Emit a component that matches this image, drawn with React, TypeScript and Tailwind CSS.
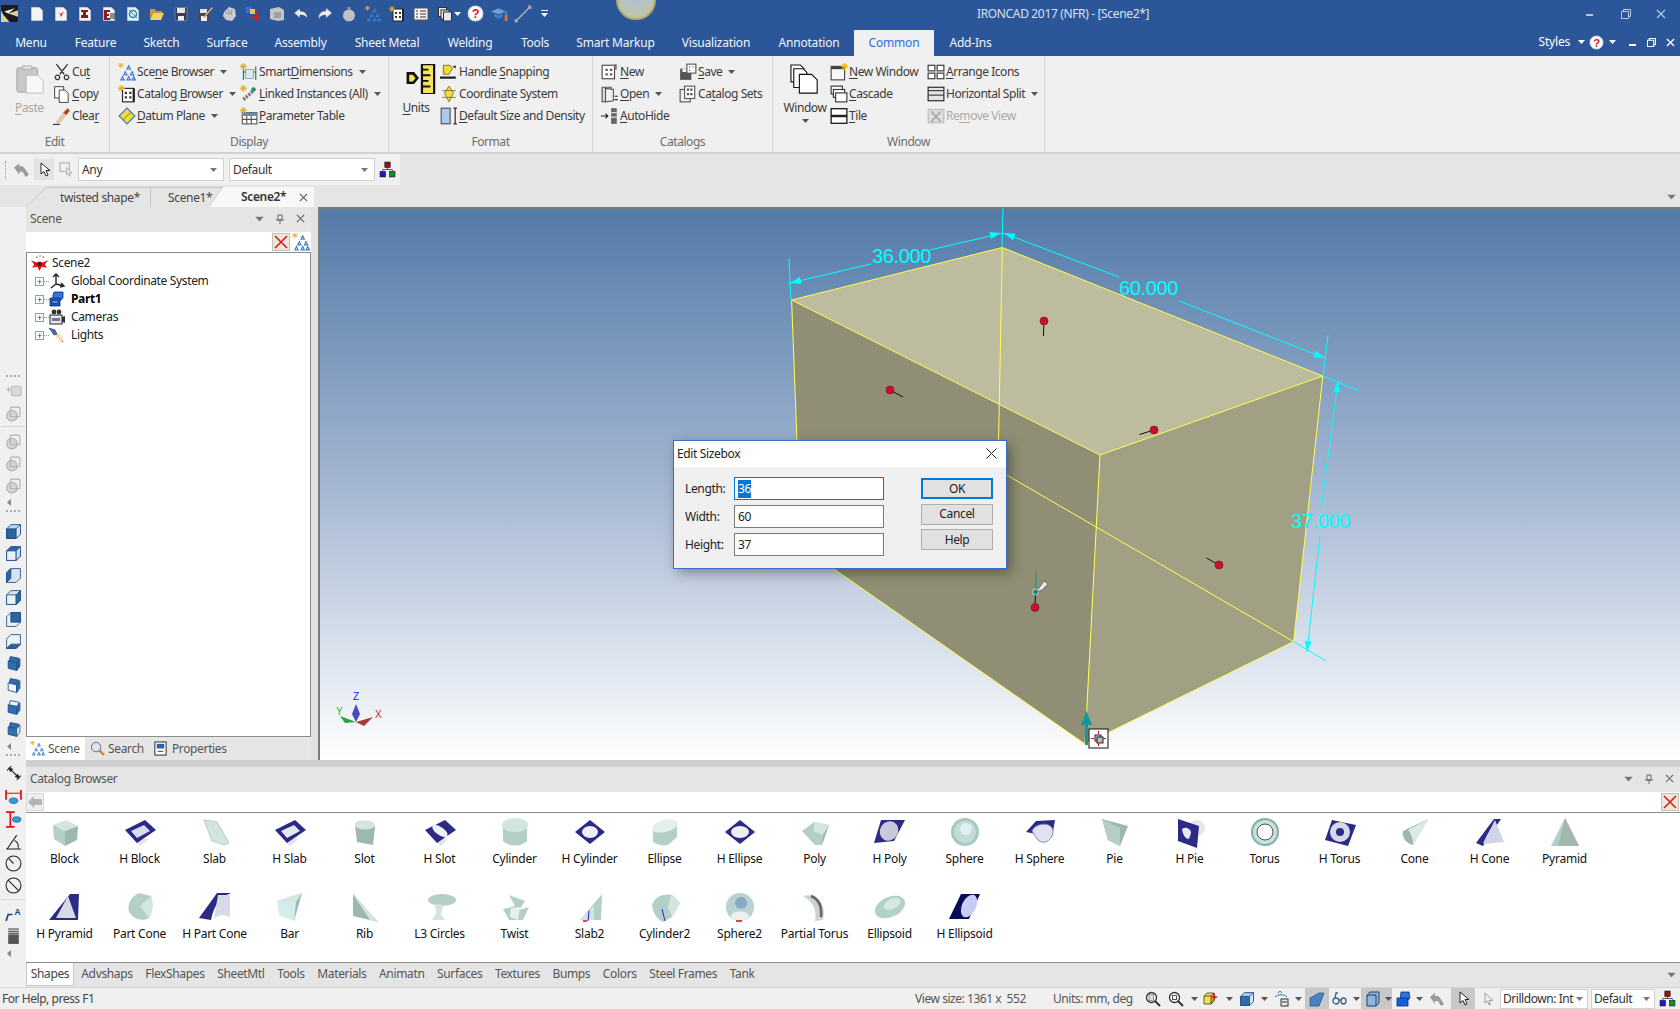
import type { ReactNode } from "react";

// ---- little drawn icons, all on a 16 box ----
const sun = <path d="M3 0v6M0 3h6M1 1l4 4M5 1L1 5" stroke="#e6b422" strokeWidth="1" />;
const nodes = (c = "#3f7fcf") => (
  <g fill="none" stroke={c} strokeWidth="1">
    <path d="M9.5 2.5l-1.5 3h3zM6.5 7.5l-1.5 3h3zM12.5 7.5l-1.5 3h3zM4 12l-1.5 3h3zM9.5 12l-1.5 3h3zM14 12l-1.5 3h3z" />
  </g>
);
const page = (c = "#f4f4f4") => <path d="M2.5 1.5h8l3 3v10h-11z" fill={c} stroke="#d8d8d8" strokeWidth=".6" />;
const cube = (a: string, b: string, c: string) => (
  <g stroke="#1e4e85" strokeWidth=".8">
    <path d="M1.5 5.5l4-4h9v9l-4 4h-9z" fill={b} />
    <path d="M1.5 5.5h9v9h-9z" fill={a} />
    <path d="M10.5 5.5l4-4v9l-4 4z" fill={c} />
  </g>
);
const solid = (a: string, b: string, c: string) => (
  <g stroke="#1e4e85" strokeWidth=".8">
    <path d="M5 1.5l8 1.5-1 4-8-1.5z" fill={b} />
    <path d="M3 5.5l8 2v7l-8-2z" fill={a} />
    <path d="M11 7.5l3-4v7l-3 4z" fill={c} />
  </g>
);
const ghost = (
  <g fill="#d4d4d4" stroke="#b0b0b0" strokeWidth="1">
    <circle cx="6.5" cy="10" r="5" />
    <rect x="5" y="2" width="9" height="9" rx="1" fill="none" />
  </g>
);

const icons: Record<string, ReactNode> = {
  logo: (
    <g>
      <rect x="0" y="0" width="16" height="16" fill="#d9d39a" />
      <path d="M0 0h16v5L7 8l9 3v5H8L2 9 0 5z" fill="#1c1c1c" />
      <path d="M3 6l10-3-6 5 6 3z" fill="#eee" />
    </g>
  ),
  doc: page(),
  docS: <g>{page()}<path d="M4 6l4 2 3-3-3 6-1-3z" fill="#c01818" /></g>,
  docI: <g>{page()}<path d="M4 4h7v2H9v3h2v3H4V9h2V6H4z" fill="#901818" /></g>,
  docE: <g>{page()}<path d="M3 4h6v2H6v2h2v2H6v2h3v2H3z" fill="#901818" /><path d="M9 8h5M9 10h5M9 12h5" stroke="#222" /></g>,
  docC: <g>{page("#e6f3fa")}<circle cx="8" cy="8" r="3.5" fill="none" stroke="#2a86b8" strokeWidth="1.5" /><path d="M4 4l8 8" stroke="#2a86b8" /></g>,
  folder: <g><path d="M1 3h5l1 2h6v2H4l-3 6z" fill="#c79a2d" /><path d="M4 7h11l-3 7H1z" fill="#f3d25f" /></g>,
  save: <g><rect x="2" y="1.5" width="12" height="13" rx="1" fill="#3a3f4d" stroke="#aab" strokeWidth=".5" /><rect x="4" y="2" width="8" height="5" fill="#dfe3ea" /><rect x="5" y="10" width="6" height="4.5" fill="#eef" /></g>,
  saveEdit: <g><rect x="1" y="3" width="12" height="12" fill="#444a58" /><rect x="3" y="3" width="7" height="4" fill="#e4e4e4" /><rect x="4" y="10" width="6" height="5" fill="#eee" /><path d="M15 1l-7 8-1 2 2-1 7-8z" fill="#f0d9a0" stroke="#7a5a20" strokeWidth=".5" /></g>,
  grayHand: <g fill="#c9cccf"><path d="M3 6l5-5 6 2 1 7-4 5-6-1-3-4z" /><path d="M4 6l4 2M7 3l2 5M11 4l-1 5" stroke="#8e9296" /></g>,
  addPart: <g><rect x="1" y="1" width="6" height="6" fill="#3c6fd0" /><rect x="5" y="3" width="5" height="5" fill="#eec74a" /><path d="M11 6v9M7 11h8" stroke="#c22" strokeWidth="2" /></g>,
  grayDoc: <g fill="#c2c4c6"><path d="M1 3l9-2 5 3v10l-6 1-8-2z" /><path d="M5 6h7v6H5z" fill="#9da0a3" /></g>,
  undo: <path d="M1 7l6-5v3c5 0 8 3 7 8-1-3-3-4-7-4v3z" fill="#e9ecef" stroke="#1f1f1f" strokeWidth=".4" />,
  redo: <path d="M15 7L9 2v3c-5 0-8 3-7 8 1-3 3-4 7-4v3z" fill="#e9ecef" stroke="#777" strokeWidth=".4" />,
  bulb: <g><circle cx="8" cy="9.5" r="6" fill="#bfc2c5" /><rect x="6.5" y="1" width="3" height="3" fill="#9a9a9a" /></g>,
  sceneB: <g>{nodes()}<g transform="translate(0 -0.5) scale(.85)">{sun}</g></g>,
  catB: <g><rect x="4" y="3" width="10" height="12" fill="#fff" stroke="#222" /><path d="M6 6h2v2H6zM10 6h2v2h-2zM6 10h2v2H6zM10 10h2v2h-2z" fill="#333" /><path d="M14 3v12" stroke="#222" strokeWidth="2" />{sun}</g>,
  list: <g><rect x="1" y="2" width="14" height="12" fill="#f4f4f4" stroke="#555" /><path d="M3 5h2M7 5h6M3 8h2M7 8h6M3 11h2M7 11h6" stroke="#333" /></g>,
  pages: <g fill="#e8e8e8" stroke="#333"><rect x="1.5" y="1.5" width="8" height="9" /><rect x="4" y="4" width="8" height="9" /><rect x="6.5" y="6" width="8" height="9" /></g>,
  help: <g><circle cx="8" cy="8" r="7" fill="#fff" stroke="#cbd5e8" /><text x="8" y="12.5" fontSize="12" fontWeight="700" fill="#e01515" textAnchor="middle" fontFamily="Liberation Sans">?</text></g>,
  cap: <g><path d="M0 6l7-3 7 3-7 3z" fill="#6a9fd8" /><path d="M3 8v3l4 2 4-2V8l-4 2z" fill="#4a7fc0" /><rect x="13" y="6" width="2.5" height="3" fill="#3b7bd0" /><rect x="13" y="9" width="2.5" height="6" fill="#e8732a" /></g>,
  lineTool: <g><path d="M2 14L14 2" stroke="#b8c0c8" /><rect x="0.5" y="12.5" width="3" height="3" fill="#9ca4ac" /><rect x="12.5" y="0.5" width="3" height="3" fill="#9ca4ac" /></g>,
  paste: (
    <g>
      <rect x="1" y="2" width="11" height="13" rx="1" fill="#c8c8c8" stroke="#a0a0a0" strokeWidth=".5" />
      <rect x="4" y="1" width="5" height="2" fill="#ddd" stroke="#a8a8a8" strokeWidth=".4" />
      <path d="M6 6h6l3 3v6.5H6z" fill="#f8f8f8" stroke="#bdbdbd" strokeWidth=".5" />
    </g>
  ),
  cut: <path d="M3 1l7 9M13 1L6 10M5 11a2 2 0 1 1-3 2 2 2 0 0 1 3-2zM11 11a2 2 0 1 0 3 2 2 2 0 0 0-3-2z" fill="none" stroke="#333" strokeWidth="1.1" />,
  copy: <g fill="#fff" stroke="#333" strokeWidth=".8"><rect x="1.5" y="1.5" width="8" height="10" /><path d="M5.5 4.5h5l3 3v8h-8z" /></g>,
  clear: <g><path d="M2 14l7-9 3 2-6 8z" fill="#e0c9b0" /><path d="M9 5l4-4 2 2-3 4z" fill="#b0461a" /><path d="M0 15.5h6" stroke="#333" /></g>,
  datum: <g><path d="M1 8l7-7 7 7-7 7z" fill="#f0dc3c" stroke="#3d77c0" /><path d="M5 11l6-6" stroke="#555" strokeDasharray="1 1" /></g>,
  smartDim: <g><path d="M3 5v10M14 3v12M3 8h11" stroke="#1a7a6e" /><rect x="5" y="6" width="7" height="8" fill="#d5ecea" stroke="#555" strokeWidth=".4" />{sun}</g>,
  linked: <g><path d="M3 13l9-8" stroke="#777" strokeWidth="3" strokeDasharray="2 1" /><circle cx="12" cy="4" r="2" fill="#1a8a7a" />{sun}</g>,
  param: <g><rect x="2" y="5" width="13" height="10" fill="#fff" stroke="#555" /><rect x="2" y="5" width="13" height="3" fill="#6d8ba8" /><path d="M2 11h13M6 8v7M10 8v7" stroke="#555" />{sun}</g>,
  units: <g><path d="M8.5 0H15v16H8.5z" fill="#f4e45c" stroke="#111" strokeWidth="1.2" /><path d="M9 3h3M9 6h4M9 9h3M9 12h4" stroke="#111" /><path d="M1 5h3l2 2.5L4 10H1z" fill="#f4e45c" stroke="#111" strokeWidth="1.4" /></g>,
  handle: <g><path d="M3 2h6l2 3-3 5H3z" fill="#f0d838" stroke="#6a5a10" strokeWidth=".7" /><path d="M11 3l3-1v3z" fill="#333" /><path d="M0 13h14" stroke="#222" strokeWidth="2" /></g>,
  coord: <path d="M8 1l4 6-4 8-4-8zM2 5h12M2 11h12" fill="#f4dc4a" stroke="#7a7420" strokeWidth=".8" />,
  defSize: <g><rect x="1" y="1" width="8" height="14" fill="#a9c8ea" stroke="#333" strokeWidth=".8" /><path d="M12 1h3M13.5 1v14M12 15h3" stroke="#222" /></g>,
  catNew: <g><rect x="1" y="2" width="11" height="12" fill="#fff" stroke="#444" /><path d="M4 5h2v2H4zM8 5h2v2H8zM4 9h2v2H4zM8 9h2v2H8z" fill="#555" /><path d="M13 1v5" stroke="#777" strokeWidth="2" /></g>,
  catOpen: <g><path d="M1 2l8 0 0 12-8 1z" fill="#ddd" stroke="#555" /><path d="M4 3l7 1v10l-7 1z" fill="#f2f2f2" stroke="#555" /><path d="M12 10h3M12 13h3" stroke="#333" /></g>,
  autoHide: <g><path d="M0 8h6M4 6l2 2-2 2" stroke="#222" fill="none" /><rect x="9" y="1" width="5" height="14" fill="#666" /><path d="M9 5h5M9 9h5" stroke="#ddd" /></g>,
  catSave: <g><rect x="1" y="5" width="10" height="10" fill="#555" /><rect x="3" y="5" width="5" height="3" fill="#eee" /><rect x="7" y="1" width="8" height="8" fill="#fff" stroke="#555" /><path d="M9 3h1v1H9zM12 3h1v1h-1zM9 6h1v1H9z" fill="#444" /></g>,
  catSets: <g><rect x="1" y="4" width="9" height="11" fill="#eee" stroke="#555" /><rect x="5" y="1" width="9" height="11" fill="#fff" stroke="#555" /><path d="M7 3h2v2H7zM10 3h2v2h-2zM7 7h2v2H7zM10 7h2v2h-2z" fill="#555" /></g>,
  winBig: <g fill="#fff" stroke="#111" strokeWidth=".6"><path d="M.5.5h5l2 2v7h-7z" /><path d="M2 2.5h5l2 2v8H2z" /><path d="M5 5.5h6.5l3 3v7H5z" /></g>,
  newWin: <g><rect x="1" y="3" width="12" height="12" fill="#f7f7f7" stroke="#444" /><rect x="1" y="3" width="12" height="2.5" fill="#444" /><g transform="translate(10 0)">{sun}</g></g>,
  cascade: <g fill="#fff" stroke="#333"><rect x="1" y="1" width="10" height="7" /><rect x="3" y="4" width="10" height="7" /><rect x="5" y="7" width="10" height="8" /></g>,
  tile: <g fill="#fff" stroke="#222" strokeWidth="1.2"><rect x="1" y="1.5" width="14" height="6" /><rect x="1" y="8.5" width="14" height="6" /></g>,
  arrange: <g fill="#fff" stroke="#333"><rect x="1" y="2" width="6" height="5" /><rect x="9" y="2" width="6" height="5" /><rect x="1" y="9" width="6" height="5" /><rect x="9" y="9" width="6" height="5" /></g>,
  hsplit: <g><rect x="1" y="2" width="14" height="12" fill="#e4e4e4" stroke="#222" /><path d="M1 5h14M1 9h14" stroke="#444" /></g>,
  removeView: <g><rect x="1" y="2" width="14" height="12" fill="#ddd" stroke="#bbb" /><path d="M4 4l8 9M12 4l-8 9" stroke="#a8a8a8" strokeWidth="1.6" /></g>,
  arrowGray: <path d="M1 6l5-4v3h3l2 2 4 6-3 2-3-5H6v3z" fill="#9a9a9a" />,
  cursor: <path d="M5 1l0 11 3-2.5 2 4.5 2-1-2-4.5h4z" fill="#fff" stroke="#111" strokeWidth=".9" />,
  cursorBox: <g><rect x="1" y="1" width="10" height="9" fill="none" stroke="#a8a8a8" /><path d="M8 6v8l2-2 1 3 1-.5-1-3h3z" fill="#eee" stroke="#999" strokeWidth=".7" /></g>,
  network: <g stroke="#111" strokeWidth=".6"><rect x="5.5" y="1" width="5" height="5" fill="#a01010" /><rect x="1" y="10" width="5" height="5" fill="#1818d8" /><rect x="10" y="10" width="5" height="5" fill="#109030" /><path d="M8 6v2M3.5 10V8h9v2" fill="none" /></g>,
  treeScene: <g><path d="M0 5l5 2 3-1 3 1 5-2-3 4 2 3-5-1-2 4-2-4-5 1 2-3z" fill="#d81818" /><circle cx="8" cy="8.500" r="2" fill="#601010" /><path d="M5 2h1M8 1h1M11 2h1" stroke="#222" /></g>,
  treeCoord: <path d="M7 1v10M4 4l3-3 3 3M7 11l8 2M12 10l3 3-4 1M7 11l-5 4" fill="none" stroke="#222" strokeWidth="1.4" />,
  treePart: <g stroke="#0c2f80" strokeWidth=".8"><path d="M5 1h9v6l-3 3H4V4z" fill="#2f74d8" /><path d="M1 7h10v8H1z" fill="#1a56c0" /><path d="M3 10h6v2H3z" fill="#bcd" /></g>,
  treeCam: <g><circle cx="5" cy="3" r="2.4" fill="#333" /><circle cx="10" cy="3" r="2.4" fill="#333" /><rect x="1" y="6" width="12" height="9" fill="#e8e6f0" stroke="#222" /><rect x="3" y="9" width="8" height="3" fill="#778" /><path d="M13 8l3-1v7l-3-1z" fill="#333" /></g>,
  treeLight: <g><path d="M0 1l6 2 2 4-3 1-2-3z" fill="#3a6fd0" stroke="#112" strokeWidth=".5" /><path d="M7 7l7 8" stroke="#d82020" /><path d="M6 9l4-3 5 6-3 3z" fill="#f0e6b0" opacity=".85" /></g>,
  search: <g><circle cx="6.5" cy="6.5" r="5" fill="#d8e6f2" stroke="#667" /><path d="M10 10l5 5" stroke="#c68a1a" strokeWidth="2.4" /></g>,
  props: <g><rect x="2" y="1" width="12" height="14" fill="#fff" stroke="#222" /><rect x="4" y="3" width="8" height="5" fill="#2c5fa8" /><path d="M5 11h6" stroke="#333" /></g>,
  gAdd: <g stroke="#bbb" fill="#d8d8d8"><rect x="6" y="3" width="9" height="9" rx="1" /><path d="M1 6h5M3.5 3.5v5" fill="none" /></g>,
  g1: ghost,
  v1: cube("#2c659f", "#bcd4ea", "#dce9f5"),
  v2: cube("#e6f0f9", "#2c659f", "#cfe0f0"),
  v3: <g stroke="#1e4e85" strokeWidth=".8"><path d="M1.5 5.5l4-4h9v9l-4 4h-9z" fill="#d5e4f2" /><path d="M1.5 5.5l4-4v9l-4 4z" fill="#2c659f" /></g>,
  v4: cube("#eaf2fa", "#d5e4f2", "#2c659f"),
  v5: <g stroke="#1e4e85" strokeWidth=".8"><path d="M1.5 5.5l4-4h9v9l-4 4h-9z" fill="#eaf2fa" /><path d="M5.5 1.5h9v9h-9z" fill="#2c659f" /></g>,
  v6: <g stroke="#1e4e85" strokeWidth=".8"><path d="M1.5 5.5l4-4h9v9l-4 4h-9z" fill="#eaf2fa" /><path d="M1.5 14.5l4-4h9l-4 4z" fill="#2c659f" /></g>,
  s1: solid("#2f6eb0", "#2f6eb0", "#2a5f98"),
  s2: solid("#eef4fb", "#2f6eb0", "#2f6eb0"),
  s3: solid("#2f6eb0", "#eef4fb", "#2f6eb0"),
  s4: solid("#2f6eb0", "#2f6eb0", "#eef4fb"),
  dim: <g stroke="#222" fill="none"><path d="M4 3l9 9M2 5l4-4M11 14l4-4" /><path d="M4 3l3 1-2 2zM13 12l-3-1 2-2z" fill="#222" /></g>,
  dimW: <g><path d="M1 1v9M15 1v9" stroke="#e01010" strokeWidth="1.6" /><path d="M1 4h14" stroke="#e01010" /><ellipse cx="8" cy="11" rx="4" ry="2.6" fill="#2aa0e8" stroke="#123" strokeWidth=".5" /></g>,
  dimH: <g><path d="M1 1h8M1 15h8M5 1v14" stroke="#e01010" strokeWidth="1.6" /><ellipse cx="11" cy="8" rx="4" ry="2.6" fill="#2aa0e8" stroke="#123" strokeWidth=".5" /></g>,
  dimA: <g stroke="#222" fill="none"><path d="M1 15h14M2 15L11 2M9 7a6 6 0 0 1 3 8" /></g>,
  dimR: <g stroke="#222" fill="none"><circle cx="8" cy="8" r="7" /><path d="M8 8L3.5 3.5" /></g>,
  dimD: <g stroke="#222" fill="none"><circle cx="8" cy="8" r="7" /><path d="M3 3l10 10" /></g>,
  note: <g><path d="M1 14l2-6h4" stroke="#1c3f86" strokeWidth="1.6" fill="none" /><text x="9" y="8" fontSize="8" fontWeight="700" fill="#1c3f86" fontFamily="Liberation Sans">A</text></g>,
  barrel: <g><path d="M3 1h10M3 3h10M3 5h10" stroke="#333" /><rect x="3" y="6" width="10" height="9" fill="#555" /></g>,
  zoomFit: <g><circle cx="6.5" cy="6.5" r="5" fill="#fff" stroke="#333" strokeWidth="1.3" /><rect x="4" y="3.5" width="4.5" height="6" fill="#ddd" stroke="#555" strokeWidth=".6" /><path d="M10 10l5 5" stroke="#333" strokeWidth="2" /></g>,
  zoomBox: <g><circle cx="6.5" cy="6.5" r="5" fill="#fff" stroke="#333" strokeWidth="1.3" /><rect x="4.5" y="4.5" width="4" height="4" fill="none" stroke="#555" /><path d="M10 10l5 5" stroke="#333" strokeWidth="2" /></g>,
  yellowBox: <g stroke="#222" strokeWidth=".7"><path d="M2 5l3-3h7v8l-3 3H2z" fill="#f5e050" /><path d="M9 5l3-3v8l-3 3zM2 5h7" fill="#c8b430" /><path d="M10 6h5M12.5 3.5v5" stroke="#e01010" strokeWidth="1.3" /></g>,
  blueBox: cube("#2f6ea8", "#a8c8e4", "#d2e4f4"),
  camOrbit: <g><rect x="7" y="8" width="7" height="7" fill="#e8e8e8" stroke="#333" /><path d="M1 6c3-3 9-3 12 0M4 2l2-2 2 2" fill="none" stroke="#2a6db0" /><path d="M8 11h5" stroke="#333" /></g>,
  skew: <path d="M1 7l9-5h5l-5 13H1z" fill="#4a84c0" stroke="#1e4e85" strokeWidth=".7" />,
  glasses: <g fill="none" stroke="#3a5f8a" strokeWidth="1.3"><circle cx="4" cy="10" r="3" /><ellipse cx="11.5" cy="10" rx="2.5" ry="3" /><path d="M7 9l2 0M3 7l1-5 2 0" /></g>,
  blueCube: <path d="M2 4h9v11H2zM2 4l3-3h9v11l-3 3" fill="#8fb4de" stroke="#1e3e66" />,
  partBlue: <g stroke="#0c2f80" strokeWidth=".8"><path d="M5 1h8l1 6-3 3H4z" fill="#2f74d8" /><rect x="1" y="7" width="11" height="8" fill="#1560d8" /></g>,
  pointerSm: <path d="M5 2v10l2.5-2 1.5 4 1.5-.6-1.5-4H13z" fill="#f4f4f4" stroke="#888" strokeWidth=".8" />,
};

function Icon({ n, s = 16, className = "" }: { n: string; s?: number; className?: string }) {
  return (
    <svg viewBox="0 0 16 16" width={s} height={s} className={"shrink-0 " + className}>
      {icons[n]}
    </svg>
  );
}

function Caret({ c = "#555", className = "" }: { c?: string; className?: string }) {
  return (
    <svg viewBox="0 0 7 4" width="7" height="4" className={"shrink-0 " + className}>
      <path d="M0 0h7L3.5 4z" fill={c} />
    </svg>
  );
}

// label with a keyboard mnemonic underlined
function Ul({ t, u }: { t: string; u?: number }) {
  if (u === undefined) return <>{t}</>;
  return (
    <>
      {t.slice(0, u)}
      <u className="underline-offset-2">{t[u]}</u>
      {t.slice(u + 1)}
    </>
  );
}

const quick = ["doc", "docS", "docI", "docE", "docC", "folder", "save", "saveEdit", "grayHand", "addPart", "grayDoc", "undo", "redo", "bulb", "sceneB", "catB", "list", "pages"];

const menuTabs = [
  ["Menu", "w-[62px]"], ["Feature", "w-[67px]"], ["Sketch", "w-[65px]"], ["Surface", "w-[66px]"], ["Assembly", "w-[81px]"],
  ["Sheet Metal", "w-[92px]"], ["Welding", "w-[74px]"], ["Tools", "w-[56px]"], ["Smart Markup", "w-[105px]"],
  ["Visualization", "w-[96px]"], ["Annotation", "w-[90px]"], ["Common", "w-[80px]"], ["Add-Ins", "w-[73px]"],
];

function TitleBar() {
  return (
    <div className="relative flex h-[27px] items-center overflow-hidden bg-[#2b579a] text-[12px] text-[#d8e2f0]">
      <div className="ml-[1px]">
        <Icon n="logo" s={17} />
      </div>
      <div className="ml-[11px] flex items-center gap-[8px]">
        {quick.map((n) => (
          <Icon key={n} n={n} s={16} />
        ))}
      </div>
      <Caret c="#fff" className="ml-[1px]" />
      <Icon n="help" s={17} className="ml-[6px]" />
      <Icon n="cap" s={17} className="ml-[7px]" />
      <Icon n="lineTool" s={18} className="ml-[6px]" />
      <div className="ml-[9px] flex flex-col items-center gap-[2px]">
        <span className="h-[1px] w-[7px] bg-white" />
        <Caret c="#fff" />
      </div>
      {/* ball poking out of the frame */}
      <div className="absolute left-[616px] top-[-22px] h-[42px] w-[40px] rounded-full border-[2px] border-[#b0a868] bg-[radial-gradient(circle_at_50%_30%,#a8c0de,#c6c69c)]" />
      <span className="absolute left-[977px] top-[5px]">IRONCAD 2017 (NFR) - [Scene2*]</span>
      <div className="ml-auto flex items-center pr-[14px]">
        <span className="mr-[28px] mt-[3px] h-[2px] w-[7px] bg-[#b9c9e0]" />
        <svg viewBox="0 0 10 10" width="10" height="10" className="mr-[25px]"><path d="M2.5 2.5v-2h7v7h-2M.5 2.5h7v7h-7z" fill="none" stroke="#b9c9e0" /></svg>
        <svg viewBox="0 0 10 10" width="10" height="10"><path d="M1 1l8 8M9 1l-8 8" stroke="#b9c9e0" strokeWidth="1.1" /></svg>
      </div>
    </div>
  );
}

function MenuBar() {
  return (
    <div className="flex h-[29px] items-end bg-[#2b579a] text-[12px] tracking-[-0.2px]">
      {menuTabs.map(([t, w]) => (
        <div
          key={t}
          className={
            w +
            " flex h-[26px] items-center justify-center " +
            (t === "Common" ? "bg-[#f0f0f0] text-[#2a6fe0]" : "text-[#f2f5fa]")
          }
        >
          {t}
        </div>
      ))}
      <div className="ml-auto mb-[5px] flex items-center text-white">
        <span>Styles</span>
        <Caret c="#fff" className="ml-[8px]" />
        <Icon n="help" s={15} className="ml-[4px]" />
        <Caret c="#fff" className="ml-[5px]" />
        <span className="ml-[13px] mt-[6px] h-[2px] w-[7px] bg-white" />
        <svg viewBox="0 0 10 10" width="9" height="9" className="ml-[11px]"><path d="M2.5 2.5v-2h7v7h-2M.5 2.5h7v7h-7z" fill="none" stroke="#fff" strokeWidth="1.2" /></svg>
        <svg viewBox="0 0 10 10" width="9" height="9" className="ml-[10px] mr-[5px]"><path d="M1 1l8 8M9 1l-8 8" stroke="#fff" strokeWidth="1.5" /></svg>
      </div>
    </div>
  );
}

function Item({ n, t, u, caret, off, w }: { n: string; t: string; u?: number; caret?: boolean; off?: boolean; w: string }) {
  return (
    <div className={w + " flex h-[22px] items-center " + (off ? "text-[#aaa]" : "")}>
      <Icon n={n} s={18} className="mr-[1px]" />
      <span className="whitespace-nowrap"><Ul t={t} u={u} /></span>
      {caret && <Caret className="ml-[6px]" />}
    </div>
  );
}

function Group({ label, w, children }: { label: string; w: string; children: ReactNode }) {
  return (
    <div className={w + " flex shrink-0 flex-col border-r border-[#d4d4d4]"}>
      <div className="flex h-[73px] pt-[5px]">{children}</div>
      <div className="h-[23px] pt-[5px] text-center leading-[16px] text-[#6c6c6c]">{label}</div>
    </div>
  );
}

function Ribbon() {
  return (
    <div className="flex h-[98px] border-b-[2px] border-[#d2d2d2] bg-[#f0f0f0] text-[12px] tracking-[-0.45px] text-[#3a3a3a]">
      <Group label="Edit" w="w-[110px]">
        <div className="ml-[15px] flex w-[38px] flex-col items-start">
          <Icon n="paste" s={30} className="mt-[3px]" />
          <span className="mt-[5px] text-[#a8a8a8]"><Ul t="Paste" u={0} /></span>
        </div>
        <div className="flex flex-col">
          <Item n="cut" t="Cut" u={2} w="w-[50px]" />
          <Item n="copy" t="Copy" u={0} w="w-[50px]" />
          <Item n="clear" t="Clear" u={4} w="w-[50px]" />
        </div>
      </Group>
      <Group label="Display" w="w-[279px]">
        <div className="ml-[8px] flex w-[122px] flex-col">
          <Item n="sceneB" t="Scene Browser" u={3} caret w="w-[120px]" />
          <Item n="catB" t="Catalog Browser" u={8} caret w="w-[120px]" />
          <Item n="datum" t="Datum Plane" u={0} caret w="w-[120px]" />
        </div>
        <div className="flex flex-col">
          <Item n="smartDim" t="SmartDimensions" u={5} caret w="w-[140px]" />
          <Item n="linked" t="Linked Instances (All)" u={0} caret w="w-[140px]" />
          <Item n="param" t="Parameter Table" u={0} w="w-[140px]" />
        </div>
      </Group>
      <Group label="Format" w="w-[204px]">
        <div className="ml-[13px] flex w-[38px] flex-col items-center">
          <Icon n="units" s={30} className="mt-[3px]" />
          <span className="mt-[5px] mr-[10px]"><Ul t="Units" u={0} /></span>
        </div>
        <div className="flex flex-col">
          <Item n="handle" t="Handle Snapping" u={7} w="w-[150px]" />
          <Item n="coord" t="Coordinate System" u={7} w="w-[150px]" />
          <Item n="defSize" t="Default Size and Density" u={0} w="w-[150px]" />
        </div>
      </Group>
      <Group label="Catalogs" w="w-[180px]">
        <div className="ml-[8px] flex w-[78px] flex-col">
          <Item n="catNew" t="New" u={0} w="w-[70px]" />
          <Item n="catOpen" t="Open" u={0} caret w="w-[70px]" />
          <Item n="autoHide" t="AutoHide" u={0} w="w-[70px]" />
        </div>
        <div className="flex flex-col">
          <Item n="catSave" t="Save" u={0} caret w="w-[70px]" />
          <Item n="catSets" t="Catalog Sets" u={2} w="w-[70px]" />
        </div>
      </Group>
      <Group label="Window" w="w-[272px]">
        <div className="ml-[7px] flex w-[50px] flex-col items-center">
          <Icon n="winBig" s={30} className="mt-[3px]" />
          <span className="mt-[5px]">Window</span>
          <Caret className="mt-[2px]" />
        </div>
        <div className="flex flex-col">
          <Item n="newWin" t="New Window" u={0} w="w-[97px]" />
          <Item n="cascade" t="Cascade" u={0} w="w-[97px]" />
          <Item n="tile" t="Tile" u={0} w="w-[97px]" />
        </div>
        <div className="flex flex-col">
          <Item n="arrange" t="Arrange Icons" u={0} w="w-[115px]" />
          <Item n="hsplit" t="Horizontal Split" caret w="w-[115px]" />
          <Item n="removeView" t="Remove View" u={2} off w="w-[115px]" />
        </div>
      </Group>
    </div>
  );
}

function Combo({ t, w }: { t: string; w: string }) {
  return (
    <div className={w + " flex h-[23px] items-center justify-between border border-[#d0d0d0] bg-white pl-[3px] pr-[6px] text-[12px] text-[#333]"}>
      <span className="whitespace-nowrap">{t}</span>
      <Caret c="#777" />
    </div>
  );
}

function SelectBar() {
  return (
    <div className="flex h-[31px] bg-[#e5e5e5]">
      <div className="flex h-full w-[400px] items-center bg-[#f0f0f0]">
        <span className="ml-[5px] h-[18px] border-l border-dotted border-[#999]" />
        <Icon n="arrowGray" s={17} className="ml-[7px]" />
        <span className="ml-[4px] flex h-[21px] w-[20px] items-center justify-center bg-[#e2e2e2]"><Icon n="cursor" s={16} /></span>
        <Icon n="cursorBox" s={15} className="ml-[5px]" />
        <span className="w-[4px]" />
        <Combo t="Any" w="w-[146px]" />
        <span className="w-[5px]" />
        <Combo t="Default" w="w-[146px]" />
        <Icon n="network" s={17} className="ml-[4px]" />
      </div>
    </div>
  );
}

function DocTabs() {
  return (
    <div className="relative flex h-[22px] items-end bg-[#e5e5e5] pl-[26px] text-[12px] text-[#444]">
      <div className="relative flex h-[20px] w-[125px] items-center border-r border-t border-[#c4c4c4] pl-[34px] [clip-path:polygon(20px_0,100%_0,100%_100%,0_100%)]">
        <svg viewBox="0 0 22 20" width="22" height="20" className="absolute left-0 top-[-1px]"><path d="M0 20L20 .5" fill="none" stroke="#b5b5b5" /></svg>
        twisted shape*
      </div>
      <div className="relative flex h-[20px] w-[72px] items-center border-t border-[#c4c4c4] pl-[17px]">
        Scene1*
        <svg viewBox="0 0 14 20" width="14" height="20" className="absolute right-0 top-[-1px]"><path d="M0 20L14 0" fill="none" stroke="#b5b5b5" /></svg>
      </div>
      <div className="relative z-10 -ml-[14px] flex h-[20px] w-[105px] items-center bg-[#f8f8f8] pl-[32px] font-semibold text-[#333] [clip-path:polygon(14px_0,100%_0,100%_100%,0_100%)]">
        Scene2*
        <svg viewBox="0 0 10 10" width="9" height="9" className="ml-[13px]"><path d="M1 1l8 8M9 1l-8 8" stroke="#555" strokeWidth="1.2" /></svg>
      </div>
      <Caret c="#777" className="absolute right-[5px] top-[10px] scale-125" />
    </div>
  );
}

const DotRow = () => <span className="my-[1px] h-[2px] w-[14px] border-t-[2px] border-dotted border-[#aaa]" />;
const SmallArrow = () => <svg viewBox="0 0 4 7" width="4" height="7" className="my-[3px] mr-[8px]"><path d="M4 0v7L0 3.5z" fill="#888" /></svg>;

function SideStrip() {
  const col = (names: string[]) =>
    names.map((n, i) => (
      <div key={n + i} className="flex h-[22px] items-center justify-center">
        <Icon n={n} s={17} />
      </div>
    ));
  return (
    <div className="flex h-full w-[26px] shrink-0 flex-col items-center bg-[#f0f0f0] pt-[167px]">
      <DotRow />
      <div className="h-[2px]" />
      {col(["gAdd", "g1"])}
      <span className="mb-[3px] mt-[2px] h-px w-[24px] bg-[#d6d6d6]" />
      {col(["g1", "g1", "g1"])}
      <SmallArrow />
      <DotRow />
      <div className="h-[7px]" />
      {col(["v1", "v2", "v3", "v4", "v5", "v6", "s1", "s2", "s3", "s4"])}
      <SmallArrow />
      <DotRow />
      <div className="h-[5px]" />
      {col(["dim"])}
      <div className="h-[2px]" />
      {col(["dimW", "dimH", "dimA", "dimR", "dimD"])}
      <span className="my-[3px] h-px w-[24px] bg-[#d6d6d6]" />
      {col(["note", "barrel"])}
      <SmallArrow />
    </div>
  );
}

function PanelTitle({ t }: { t: string }) {
  return (
    <div className="flex h-[25px] shrink-0 items-center justify-between bg-[#e5e5e5] pb-[2px] pl-[4px] pr-[6px] text-[12px] text-[#555]">
      {t}
      <div className="flex items-center">
        <Caret c="#777" className="scale-125" />
        <svg viewBox="0 0 8 10" width="8" height="10" className="ml-[13px]"><path d="M2 1h4v5H2zM0 6h8M4 6v4" fill="none" stroke="#666" /></svg>
        <svg viewBox="0 0 10 10" width="9" height="9" className="ml-[12px]"><path d="M1 1l8 8M9 1l-8 8" stroke="#666" strokeWidth="1.2" /></svg>
      </div>
    </div>
  );
}

const RedX = () => (
  <span className="flex h-[18px] w-[18px] items-center justify-center border border-[#c8c0b0] bg-[#ece6dc]">
    <svg viewBox="0 0 14 14" width="14" height="14"><path d="M1 1l12 12M13 1L1 13" stroke="#d02020" strokeWidth="1.6" /></svg>
  </span>
);

const treeRows = [
  ["treeCoord", "Global Coordinate System"],
  ["treePart", "Part1"],
  ["treeCam", "Cameras"],
  ["treeLight", "Lights"],
];

function ScenePanel() {
  return (
    <div className="flex h-full w-[285px] shrink-0 flex-col">
      <PanelTitle t="Scene" />
      <div className="flex h-[20px] shrink-0 items-center justify-end gap-[2px] bg-white pr-[1px]">
        <RedX />
        <Icon n="sceneB" s={18} />
      </div>
      <div className="flex-1 border border-[#8c8c8c] bg-white pt-[1px] text-[12px] text-[#222]">
        <div className="flex h-[18px] items-center pl-[4px]">
          <Icon n="treeScene" s={17} />
          <span className="ml-[4px]">Scene2</span>
        </div>
        {treeRows.map(([n, t]) => (
          <div key={t} className="relative flex h-[18px] items-center pl-[8px]">
            <span className="flex h-[9px] w-[9px] items-center justify-center border border-[#8f9db5] text-[9px] leading-none text-[#28407a]">+</span>
            <span className="w-[5px] border-t border-dotted border-[#999]" />
            <Icon n={n} s={16} />
            <span className={"ml-[6px] " + (t === "Part1" ? "font-bold text-black" : "")}>{t}</span>
          </div>
        ))}
      </div>
      <div className="flex h-[23px] shrink-0 items-center bg-[#e5e5e5] text-[12px] text-[#555]">
        <div className="flex h-full w-[59px] items-center bg-white pl-[4px]">
          <Icon n="sceneB" s={15} /><span className="ml-[3px]">Scene</span>
        </div>
        <Icon n="search" s={15} className="ml-[5px]" /><span className="ml-[3px]">Search</span>
        <Icon n="props" s={15} className="ml-[9px]" /><span className="ml-[4px]">Properties</span>
      </div>
    </div>
  );
}

function Pin({ x, y, tx, ty }: { x: number; y: number; tx: number; ty: number }) {
  return (
    <g>
      <path d={`M${x} ${y}L${tx} ${ty}`} stroke="#111" />
      <circle cx={x} cy={y} r="4" fill="#c8102e" stroke="#7a0a1a" strokeWidth=".6" />
    </g>
  );
}

function DimLine({ x1, y1, x2, y2 }: { x1: number; y1: number; x2: number; y2: number }) {
  return <path d={`M${x1} ${y1}L${x2} ${y2}`} stroke="#00ffff" strokeWidth="1" />;
}

function Arrow({ x, y, a }: { x: number; y: number; a: number }) {
  return <path d="M0 0L11 -3.5V3.5z" fill="#00ffff" transform={`translate(${x} ${y}) rotate(${a})`} />;
}

function Model() {
  return (
    <svg viewBox="318 207 1362 553" width="1362" height="553" className="absolute inset-0">
      <polygon points="791.6,300 1002.3,247.5 1322.8,376 1100,455" fill="#bdbc9f" />
      <polygon points="791.6,300 1100,455 1085,744 801,546" fill="#908f75" />
      <polygon points="1100,455 1322.8,376 1293.6,641.6 1085,744" fill="#a1a084" />
      <g stroke="#ffff50" strokeWidth="1" fill="none">
        <path d="M791.6 300L1002.3 247.5L1322.8 376L1100 455Z" />
        <path d="M791.6 300L801 546L1085 744L1293.6 641.6L1322.8 376" />
        <path d="M1100 455L1085 744" />
        <path d="M1002.3 247.5L998 470L1293.6 641.6" />
      </g>
      {/* dimensions */}
      <DimLine x1={789} y1={259} x2={791} y2={300} />
      <DimLine x1={1003} y1={208} x2={1002} y2={247} />
      <DimLine x1={1328} y1={335} x2={1323} y2={376} />
      <DimLine x1={1323} y1={376} x2={1359} y2={391} />
      <DimLine x1={1293.6} y1={641.6} x2={1326} y2={661} />
      <DimLine x1={788} y1={283.5} x2={871} y2={264} />
      <DimLine x1={930} y1={250} x2={1003} y2={233} />
      <DimLine x1={1003} y1={233} x2={1119} y2={277} />
      <DimLine x1={1179} y1={301} x2={1325} y2={358} />
      <DimLine x1={1338} y1={381} x2={1321} y2={510} />
      <DimLine x1={1320} y1={535} x2={1307} y2={652} />
      <Arrow x={790} y={283} a={-13} />
      <Arrow x={1001} y={233} a={167} />
      <Arrow x={1004} y={233} a={21} />
      <Arrow x={1325} y={358} a={201} />
      <Arrow x={1338} y={381} a={97} />
      <Arrow x={1307} y={652} a={276} />
      <g fill="#00ffff" fontSize="20" fontFamily="Liberation Sans, sans-serif">
        <text x="872" y="263">36.000</text>
        <text x="1119" y="295">60.000</text>
        <text x="1291" y="528">37.000</text>
      </g>
      {/* handles */}
      <Pin x={1044} y={321} tx={1043.4} ty={336} />
      <Pin x={890} y={390} tx={903} ty={397} />
      <Pin x={1154} y={430} tx={1139.5} ty={434.5} />
      <Pin x={1219} y={565} tx={1206.6} ty={558} />
      <Pin x={1035} y={607.5} tx={1035.5} ty={592} />
      <path d="M1036 592V572" stroke="#0f8f8f" />
      <circle cx="1035.5" cy="592" r="3" fill="#1a8a8a" stroke="#fff" strokeWidth=".6" />
      <path d="M1036 592l3-4 5-7 4 3-6 6z" fill="#e8e8e8" stroke="#444" strokeWidth=".6" />
      <path d="M1086.5 745V723" stroke="#119a9e" strokeWidth="3" />
      <path d="M1081 725h11l-5.5 -14z" fill="#119a9e" />
      <rect x="1089" y="729" width="19" height="19" fill="#fff" stroke="#111" />
      <rect x="1095" y="735" width="6" height="6" fill="#ccc" stroke="#222" />
      <rect x="1097" y="737" width="6" height="6" fill="#bbb" stroke="#222" />
      <path d="M1098.5 731v3M1098.5 743v3M1091 738.5h3M1103 738.5h3" stroke="#e01010" />
      {/* triad */}
      <g>
        <path d="M356 722L340 716l5 7z" fill="#2e9e3e" />
        <path d="M356 722l17-5-9 9z" fill="#a83a3a" />
        <path d="M356 722l-4-8 4-10 4 10z" fill="#4a4ac8" />
        <text x="353" y="700" fontSize="10" fill="#1a1ae0" fontFamily="Liberation Sans">Z</text>
        <text x="336" y="715" fontSize="10" fill="#18c018" fontFamily="Liberation Sans">Y</text>
        <text x="375" y="718" fontSize="10" fill="#e01818" fontFamily="Liberation Sans">X</text>
      </g>
    </svg>
  );
}

function DialogField({ label, val, active }: { label: string; val: string; active?: boolean }) {
  return (
    <div className="flex h-[23px] items-center">
      <span className="w-[49px] pl-[11px]">{label}</span>
      <div className={"ml-[11px] flex h-full w-[150px] items-center bg-white pl-[3px] border " + (active ? "border-[#0078d7]" : "border-[#7a7a7a]")}>
        {active ? <span className="bg-[#0078d7] text-white">{val}</span> : val}
      </div>
    </div>
  );
}

function DialogButton({ t, primary }: { t: string; primary?: boolean }) {
  return (
    <div className={"flex h-[21px] w-[72px] items-center justify-center bg-[#e1e1e1] " + (primary ? "border-[2px] border-[#0078d7]" : "border border-[#adadad]")}>
      {t}
    </div>
  );
}

function SizeDialog() {
  return (
    <div className="absolute left-[355px] top-[233px] flex h-[129px] w-[334px] flex-col border border-[#3b6cc0] bg-[#f0f0f0] text-[12px] text-[#222] shadow-[4px_4px_12px_rgba(0,0,0,0.35)]">
      <div className="flex h-[26px] items-center justify-between bg-white pb-[1px] pl-[3px] pr-[9px]">
        Edit Sizebox
        <svg viewBox="0 0 11 11" width="11" height="11"><path d="M.5.5l10 10M10.5 .5l-10 10" stroke="#222" /></svg>
      </div>
      <div className="flex flex-1">
        <div className="flex flex-col gap-[5px] pt-[10px]">
          <DialogField label="Length:" val="36" active />
          <DialogField label="Width:" val="60" />
          <DialogField label="Height:" val="37" />
        </div>
        <div className="ml-[37px] flex flex-col gap-[4.5px] pt-[11px]">
          <DialogButton t="OK" primary />
          <DialogButton t="Cancel" />
          <DialogButton t="Help" />
        </div>
      </div>
    </div>
  );
}

// ---- catalog thumbnails, 32 box ----
const T = "#d3e6de", L = "#b4cfc6", R = "#9db9af", N = "#2b2b85";
const box32 = (a = T, b = L, c = R) => (
  <g>
    <path d="M4 8L17 3l12 6-13 5z" fill={a} />
    <path d="M4 8l12 6v15L5 22z" fill={b} />
    <path d="M16 14l13-5-1 14-12 6z" fill={c} />
  </g>
);
const frame = (inner: ReactNode) => (
  <g>
    <path d="M1 13L21 3l11 10-19 13z" fill={N} />
    {inner}
  </g>
);
const shapes: Record<string, ReactNode> = {
  Block: box32(),
  "H Block": <g><path d="M8 22l8 7 9-7z" fill="#e4e4e4" />{frame(<path d="M7 14l13-6 6 6-13 7z" fill="#dcdcf0" />)}</g>,
  Slab: <path d="M5 3l13 2 12 21-4 2-13-4z" fill={T} stroke={L} />,
  "H Slab": <g><path d="M8 22l8 7 9-7z" fill="#e4e4e4" />{frame(<path d="M7 14l13-6 6 6-13 7z" fill="#e8e8f4" />)}</g>,
  Slot: <g><path d="M6 8c0-6 19-6 20 2l-2 18-16-3z" fill={R} /><ellipse cx="16" cy="8" rx="10" ry="4.5" fill={T} /></g>,
  "H Slot": <g><path d="M10 22l7 7 7-7z" fill="#e4e4e4" />{frame(<ellipse cx="16" cy="14" rx="9" ry="4" transform="rotate(35 16 14)" fill="#eef0f6" />)}</g>,
  Cylinder: <g><path d="M4 8v16c6 6 18 6 24 0V8z" fill={L} /><ellipse cx="16" cy="8" rx="13" ry="7" fill={T} /></g>,
  Ellipse: <g><path d="M4 12v13c4 3 12 4 15 3l9-8V7z" fill={L} /><ellipse cx="16" cy="9" rx="13" ry="6" transform="rotate(-14 16 9)" fill="#e4f0ea" /></g>,
  "H Cylinder": <g><path d="M1 15L16 3l15 12-15 12z" fill={N} /><ellipse cx="16" cy="15" rx="8" ry="6" fill="#eef0f4" /></g>,
  "H Ellipse": <g><path d="M1 15L16 3l15 12-15 12z" fill={N} /><ellipse cx="16" cy="15" rx="9" ry="6" fill="#eef0f4" /></g>,
  Poly: <g><path d="M3 14L15 5l15 3-7 20-7 0z" fill={L} /><path d="M15 5l15 3-6 10-9-3z" fill={T} /><path d="M24 18l6-10-7 20z" fill={R} /></g>,
  "H Poly": <g><path d="M7 3h24l-11 21-20 2z" fill={N} /><ellipse cx="15" cy="14" rx="9" ry="10" transform="rotate(30 15 14)" fill="#c8c8d8" /></g>,
  Sphere: <g><circle cx="16" cy="15" r="14" fill="#a9c8c0" /><circle cx="16" cy="15" r="11" fill="#c4dbd6" /><circle cx="17" cy="12" r="6" fill="#e2eff2" /></g>,
  "H Sphere": <g><path d="M2 15L12 4l19-1-3 17z" fill={N} /><path d="M8 14c3-8 20-10 21 0 0 10-10 14-15 9-3-4-4-6-6-9z" fill="#dfe2f0" stroke="#8a8ab0" /></g>,
  Pie: <g><path d="M3 2l26 7-8 20-12-6z" fill={R} /><path d="M3 2l18 9 0 18-12-6z" fill={L} /></g>,
  "H Pie": <g><ellipse cx="23" cy="11" rx="8" ry="8" fill="#e6e6e6" /><path d="M4 2l21 7-2 22-19-7z" fill={N} /><path d="M8 12c4-3 9 0 9 4l-2 6c-3 0-6-3-7-10z" fill="#e8e8f4" /></g>,
  Torus: <g><circle cx="16" cy="15" r="14" fill="#7fb0a8" /><circle cx="16" cy="15" r="12" fill="#c9e0dc" /><circle cx="16" cy="15" r="8" fill="#fff" stroke="#505050" /></g>,
  "H Torus": <g><path d="M8 3l24 5-8 21L1 23z" fill={N} /><circle cx="16" cy="15" r="10" fill="#d8d8e8" /><circle cx="16" cy="15" r="4" fill={N} /></g>,
  Cone: <g><path d="M29 2L4 14c-2 6 4 13 10 14z" fill={R} /><path d="M29 2L9 13c3 3 5 8 5 15z" fill="#dcebe5" /></g>,
  "H Cone": <g><path d="M20 2h7l-18 27-7-3z" fill={N} /><path d="M21 3l9 22-20 2c-2-1 2-6 11-24z" fill="#cfd4e6" /></g>,
  Pyramid: <g><path d="M16 1L2 29h28z" fill={L} /><path d="M16 1l-7 28h21z" fill="#a2b8ac" /></g>,
  "H Pyramid": <g><path d="M21 2h9l-1 26H0z" fill={N} /><path d="M19 4l8 22H7z" fill="#d7d9e8" /></g>,
  "Part Cone": <g><path d="M15 1C7 5 3 12 5 19c3 8 14 11 20 7 3-5 5-12 2-22z" fill={L} /><path d="M27 4L16 14l9 12c3-5 5-12 2-22z" fill={T} /></g>,
  "H Part Cone": <g><path d="M18 1h14C20 6 15 14 12 28L0 26z" fill={N} /><path d="M19 3h12l0 22c-6-3-11-2-16 1z" fill="#d8dae8" /></g>,
  Bar: <g><path d="M3 9L28 1l-8 28-15-6z" fill="#d5ecec" /><path d="M3 9L28 1l-6 9z" fill={T} /><path d="M22 10l6-9-8 28z" fill={R} /></g>,
  Rib: <g><path d="M4 2v22l25 6z" fill={R} /><path d="M4 2l25 28-8-2z" fill={T} /></g>,
  "L3 Circles": <g><ellipse cx="18" cy="8" rx="14" ry="6" fill={L} /><path d="M11 12l9 1-3 9 4 6H8l4-7z" fill={T} /></g>,
  Twist: <g><path d="M10 3l16 6-6 9 10-3-6 13-14 0-6-11 12-3z" fill={L} /><path d="M12 16l9-1-2 13-8-3z" fill="#e8f0ec" /></g>,
  Slab2: <g><path d="M6 28L28 2l-1 26z" fill={L} /><path d="M6 28l14-14v14z" fill={T} /><path d="M14 29l1-10" stroke="#2222dd" /><path d="M9 29h4" stroke="#d01010" strokeWidth="1.5" /></g>,
  Cylinder2: <g><path d="M3 13c2-8 12-12 20-10l8 8-8 14-9 5c-7-3-10-10-11-17z" fill={L} /><path d="M22 3l9 8-8 14-4-10z" fill={T} /><path d="M13 17l3 12" stroke="#2222dd" /></g>,
  Sphere2: <g><circle cx="16" cy="15" r="14" fill="#b9d2d2" /><circle cx="17" cy="11" r="6" fill="#8aa8c8" /><ellipse cx="16" cy="24" rx="9" ry="4.5" fill="#f0f0f0" /><path d="M12 29h6" stroke="#d01010" strokeWidth="1.5" /></g>,
  "Partial Torus": <g><path d="M4 4c14-4 24 8 20 24l-8 1c2-10-1-19-12-25z" fill="#c8d4cc" /><path d="M12 4c8 3 11 10 10 21" stroke="#666" strokeWidth="2.5" fill="none" /></g>,
  Ellipsoid: <g><ellipse cx="16" cy="15" rx="16" ry="10" transform="rotate(-25 16 15)" fill="#b3d1c9" /><ellipse cx="18" cy="12" rx="9" ry="5" transform="rotate(-25 18 12)" fill="#d5e8e2" /></g>,
  "H Ellipsoid": <g><path d="M12 2h19L20 27H0z" fill="#0a0a55" /><ellipse cx="20" cy="14" rx="7" ry="12" transform="rotate(25 20 14)" fill="#c6cdf2" /></g>,
};

const rowOne = ["Block", "H Block", "Slab", "H Slab", "Slot", "H Slot", "Cylinder", "H Cylinder", "Ellipse", "H Ellipse", "Poly", "H Poly", "Sphere", "H Sphere", "Pie", "H Pie", "Torus", "H Torus", "Cone", "H Cone", "Pyramid"];
const rowTwo = ["H Pyramid", "Part Cone", "H Part Cone", "Bar", "Rib", "L3 Circles", "Twist", "Slab2", "Cylinder2", "Sphere2", "Partial Torus", "Ellipsoid", "H Ellipsoid"];
const catalogTabs = ["Advshaps", "FlexShapes", "SheetMtl", "Tools", "Materials", "Animatn", "Surfaces", "Textures", "Bumps", "Colors", "Steel Frames", "Tank"];

function CatalogPanel() {
  return (
    <div className="flex h-[219px] shrink-0 flex-col">
      <PanelTitle t="Catalog Browser" />
      <div className="flex h-[20px] shrink-0 items-center justify-between bg-white pr-[1px]">
        <span className="flex h-[18px] w-[18px] items-center justify-center border border-[#d8d8d8] bg-[#efefef]">
          <svg viewBox="0 0 14 12" width="14" height="12"><path d="M0 6l6-6v3h8v6H6v3z" fill="#b4b4b4" /></svg>
        </span>
        <RedX />
      </div>
      <div className="h-[151px] shrink-0 border-y border-[#8c8c8c] bg-white text-[12px] tracking-[-0.25px] text-[#111]">
        {[rowOne, rowTwo].map((row, i) => (
          <div key={i} className="grid grid-cols-[repeat(21,75px)] pl-[1px]">
            {row.map((t) => (
              <div key={t} className="flex h-[75px] flex-col items-center pt-[4px]">
                <svg viewBox="0 0 32 32" width="32" height="32" className="shrink-0">{shapes[t]}</svg>
                <span className="mt-[2px] whitespace-nowrap leading-[16px]">{t}</span>
              </div>
            ))}
          </div>
        ))}
      </div>
      <div className="flex flex-1 items-start bg-[#e5e5e5] text-[12px] text-[#555]">
        <div className="flex h-[23px] w-[48px] items-center justify-center border-x border-b border-[#c8c8c8] bg-white text-[#444]">Shapes</div>
        <div className="ml-[1px] flex h-[22px] items-center">
          {catalogTabs.map((t) => (
            <span key={t} className="whitespace-nowrap px-[6.3px]">{t}</span>
          ))}
        </div>
        <Caret c="#777" className="ml-auto mr-[5px] mt-[10px] scale-125" />
      </div>
    </div>
  );
}

const statusIcons: [string, string, string?][] = [
  ["zoomFit", "w-[22px]"], ["zoomBox", "w-[24px]"], ["", "w-[12px]"], ["yellowBox", "w-[20px]"], ["", "w-[18px]"], ["blueBox", "w-[17px]"], ["", "w-[18px]"],
  ["camOrbit", "w-[18px]"], ["", "w-[14px]"], ["skew", "w-[24px]", "bg-[#c8c8c8]"], ["glasses", "w-[22px]"], ["", "w-[10px]"],
  ["blueCube", "w-[24px]", "bg-[#c8c8c8]"], ["", "w-[7px]", "bg-[#c8c8c8]"], ["partBlue", "w-[24px]"], ["", "w-[6px]"], ["arrowGray", "w-[29px]"],
  ["cursor", "w-[24px]", "bg-[#c8c8c8]"], ["pointerSm", "w-[25px]"],
];

function StatusBar() {
  return (
    <div className="flex h-[22px] shrink-0 items-center border-t border-[#d4d4d4] bg-[#f0f0f0] text-[12px] tracking-[-0.45px] text-[#444]">
      <span className="w-[915px] pl-[2px]">For Help, press F1</span>
      <span className="w-[138px] whitespace-pre text-[#555]">View size: 1361 x  552</span>
      <span className="w-[89px] whitespace-nowrap text-[#555]">Units: mm, deg</span>
      {statusIcons.map(([n, w, bg], i) => (
        <span key={i} className={w + " flex h-full items-center justify-center " + (bg ?? "")}>
          {n ? <Icon n={n} s={16} /> : <Caret />}
        </span>
      ))}
      <div className="flex h-[20px] w-[88px] items-center justify-between border border-[#d0d0d0] bg-white pl-[2px] pr-[4px] text-[#333]">
        <span className="whitespace-nowrap">Drilldown: Int</span>
        <Caret c="#777" />
      </div>
      <div className="ml-[3px] flex h-[20px] w-[64px] items-center justify-between border border-[#d0d0d0] bg-white pl-[2px] pr-[4px] text-[#333]">
        Default
        <Caret c="#777" />
      </div>
      <Icon n="network" s={17} className="ml-[4px]" />
    </div>
  );
}

export default function App() {
  return (
    <div className="flex h-[1009px] w-[1680px] flex-col overflow-hidden bg-[#e5e5e5] font-['Noto_Sans','Open_Sans',sans-serif] tracking-[-0.35px]">
      <TitleBar />
      <MenuBar />
      <Ribbon />
      <SelectBar />
      <DocTabs />
      <div className="flex min-h-0 flex-1">
        <SideStrip />
        <div className="flex min-w-0 flex-1 flex-col">
          <div className="flex h-[553px] shrink-0">
            <ScenePanel />
            <div className="w-[7px] shrink-0 bg-[#e2e2e2]" />
            <div className="relative flex-1 bg-linear-to-b from-[#537aa8] via-[#a3b6d1] to-[#ffffff] shadow-[inset_2px_2px_0_#7a7a7a]">
              <Model />
              <SizeDialog />
            </div>
          </div>
          <div className="h-[7px] shrink-0 bg-[#cfcfcf]" />
          <CatalogPanel />
        </div>
      </div>
      <StatusBar />
    </div>
  );
}
